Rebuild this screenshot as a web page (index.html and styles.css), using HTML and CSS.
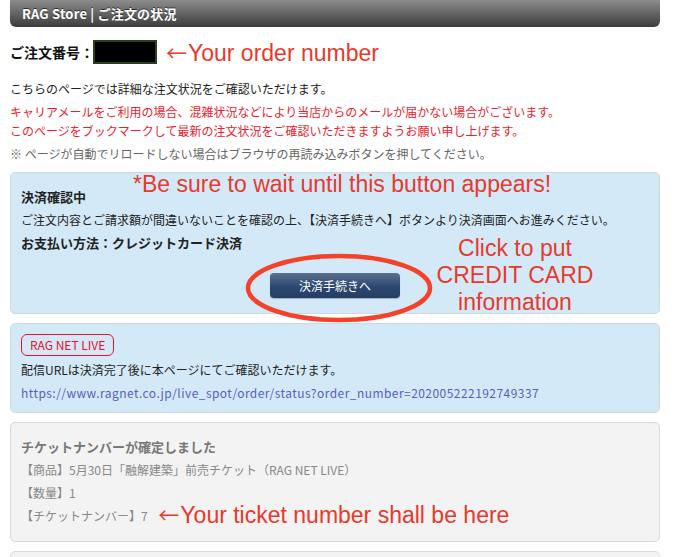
FILE: index.html
```html
<!DOCTYPE html>
<html lang="ja">
<head>
  <meta charset="UTF-8">
  <title>RAG Store | ご注文の状況</title>
  <link rel="stylesheet" href="styles.css">
</head>
<body>
  <div class="page">
    <div class="header">RAG Store | ご注文の状況</div>

    <!-- Order number -->
    <div class="order-row">
      <span class="order-label">ご注文番号：</span>
      <span class="order-number"></span>
      <span class="note-red note-order"><span class="arrow">←</span>Your order number</span>
    </div>

    <p class="intro">こちらのページでは詳細な注文状況をご確認いただけます。</p>
    <p class="warn">
      キャリアメールをご利用の場合、混雑状況などにより当店からのメールが届かない場合がございます。<br>
      このページをブックマークして最新の注文状況をご確認いただきますようお願い申し上げます。
    </p>
    <p class="hint">※ ページが自動でリロードしない場合はブラウザの再読み込みボタンを押してください。</p>

    <!-- Payment -->
    <div class="box box-blue payment">
      <span class="note-red note-wait">*Be sure to wait until this button appears!</span>
      <div class="row bold">決済確認中</div>
      <div class="row">ご注文内容とご請求額が間違いないことを確認の上、【決済手続きへ】ボタンより決済画面へお進みください。</div>
      <div class="row bold">お支払い方法：クレジットカード決済</div>
      <div class="btn-wrap">
        <button type="button" class="pay-btn">決済手続きへ</button>
      </div>
      <svg class="circle" width="194" height="74" viewBox="0 0 194 74">
        <ellipse cx="97" cy="37" rx="91" ry="32" fill="none" stroke="#f5412a" stroke-width="4.5"/>
      </svg>
      <div class="note-red note-click">Click to put<br>CREDIT CARD<br>information</div>
    </div>

    <!-- Live -->
    <div class="box box-blue live">
      <span class="badge">RAG NET LIVE</span>
      <div class="row">配信URLは決済完了後に本ページにてご確認いただけます。</div>
      <div class="row"><a class="link" href="#">https://www.ragnet.co.jp/live_spot/order/status?order_number=202005222192749337</a></div>
    </div>

    <!-- Ticket -->
    <div class="box box-gray ticket">
      <div class="row bold">チケットナンバーが確定しました</div>
      <div class="row">【商品】5月30日「融解建築」前売チケット（RAG NET LIVE）</div>
      <div class="row">【数量】1</div>
      <div class="row">【チケットナンバー】7 <span class="note-red note-ticket"><span class="arrow">←</span>Your ticket number shall be here</span></div>
    </div>

    <div class="box box-gray next"></div>
  </div>
</body>
</html>
```

FILE: styles.css
```css
body {
  margin: 0;
  font-family: "Noto Sans CJK JP", "Noto Sans", sans-serif;
  font-size: 12px;
  color: #222;
  background: #fff;
}

.page {
  padding: 0 15px 0 10px;
}

.header {
  height: 27px;
  line-height: 27px;
  padding-left: 12px;
  color: #fff;
  font-size: 13px;
  font-weight: bold;
  letter-spacing: 0.2px;
  border-radius: 0 0 6px 6px;
  background: linear-gradient(#8c8c8c, #3c3c3c);
  text-shadow: 0 -1px 0 rgba(0, 0, 0, 0.6);
}

.order-row {
  display: flex;
  align-items: center;
  height: 24px;
  margin-top: 13px;
}

.order-label {
  font-size: 14px;
  font-weight: bold;
  color: #111;
}

.order-number {
  width: 60px;
  height: 20px;
  background: #000;
  border: 2px solid #2b3f1d;
  margin-left: -1px;
}

.note-red {
  font-family: "Liberation Sans", Arial, sans-serif;
  font-size: 23px;
  color: #e8392b;
  font-weight: normal;
  white-space: nowrap;
}

.arrow {
  font-family: "Noto Sans CJK JP", sans-serif;
  font-size: 21px;
  margin-right: 1px;
}

.note-order {
  margin-left: 9px;
}

p {
  margin: 0;
  line-height: 19px;
}

.intro {
  margin-top: 15px;
  color: #222;
}

.warn {
  margin-top: 4px;
  color: #ee1c2e;
}

.hint {
  margin-top: 4px;
  color: #666;
}

.box {
  position: relative;
  border-radius: 5px;
  padding: 12px 10px 14px;
}

.box-blue {
  background: #d4e9f8;
  border: 1px solid #cfd9e0;
}

.box-gray {
  background: #f3f3f3;
  border: 1px solid #dadada;
  color: #888;
}

.row {
  line-height: 23px;
  white-space: nowrap;
}

.bold {
  font-weight: bold;
  font-size: 13px;
}

.payment {
  margin-top: 9px;
  padding-bottom: 15px;
}

.note-wait {
  position: absolute;
  top: 0;
  left: 122px;
  line-height: 23px;
}

.btn-wrap {
  display: flex;
  justify-content: center;
  margin-top: 19px;
}

.pay-btn {
  width: 130px;
  height: 25px;
  border: none;
  border-radius: 4px;
  color: #fff;
  font-family: inherit;
  font-size: 12px;
  background: linear-gradient(#5e7290, #2c4770 55%, #243e65);
  box-shadow: 0 1px 1px rgba(0, 0, 0, 0.25);
  cursor: pointer;
}

.circle {
  position: absolute;
  left: 231px;
  top: 78px;
  overflow: visible;
}

.note-click {
  position: absolute;
  top: 62px;
  left: 414px;
  width: 180px;
  text-align: center;
  line-height: 27px;
}

.live {
  margin-top: 9px;
  padding: 10px 10px 8px;
}

.badge {
  display: inline-block;
  height: 20px;
  line-height: 20px;
  padding: 0 8px;
  border: 1px solid #e8102a;
  border-radius: 6px;
  color: #e8102a;
  background: #d4e9f8;
}

.live .badge + .row {
  margin-top: 2px;
}

.link {
  color: #5a5cc4;
  text-decoration: none;
  letter-spacing: 0.45px;
}

.ticket {
  margin-top: 9px;
}

.ticket .bold {
  color: #777;
}

.note-ticket {
  margin-left: 8px;
  vertical-align: -2px;
  line-height: 1;
}

.next {
  margin-top: 9px;
  height: 40px;
  padding: 0;
}
```
